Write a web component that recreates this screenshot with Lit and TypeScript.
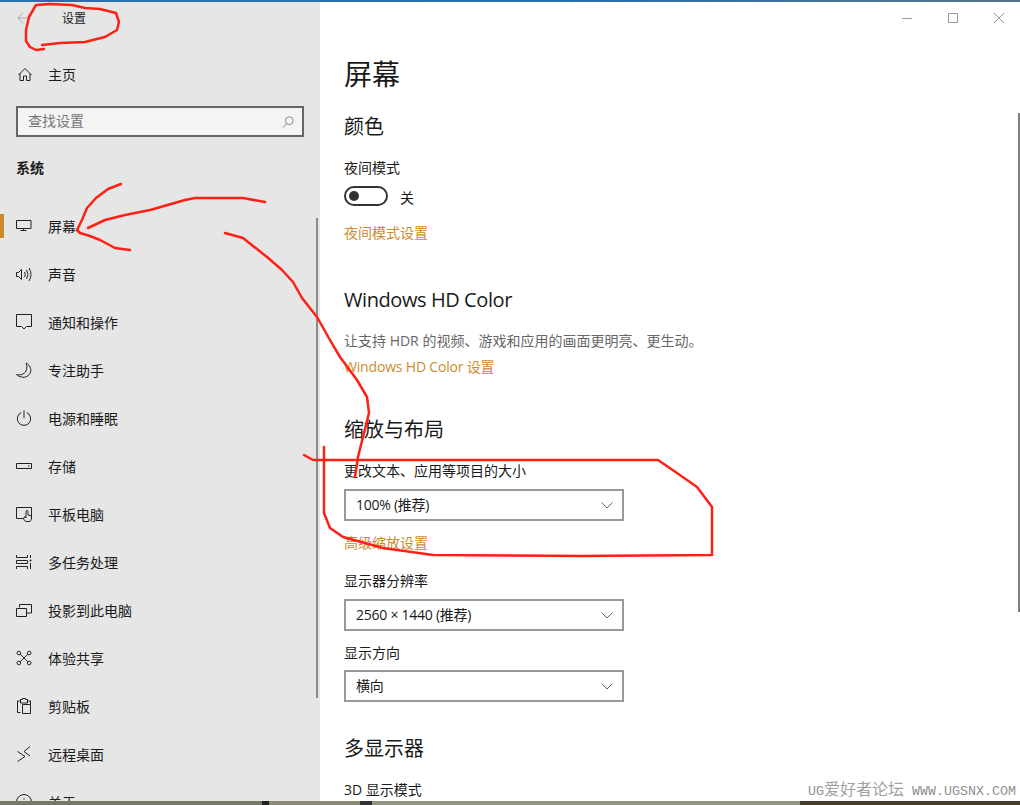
import { LitElement, html, css, svg } from "lit";
import { customElement } from "lit/decorators.js";

const ic = (body: unknown) => html`<svg class="ic" viewBox="0 0 16 16" width="16" height="16" fill="none" stroke="#222" stroke-width="1">${body}</svg>`;

const NAV: [string, unknown][] = [
  ["屏幕", svg`<path d="M.5 2.500h14.500v8H.5zM7.500 10.500v2.500M4.500 12.500h6"/>`],
  ["声音", svg`<path d="M.5 6.500v4h2l3 3V3.500l-3 3zM8.500 6q1.500 2.500 0 5M10.500 4q3 4.500 0 9M13 2q4 6.500 0 13"/>`],
  ["通知和操作", svg`<path d="M.5 .5h15v12h-5l-2.500 2.500-2.500-2.500h-5z"/>`],
  ["专注助手", svg`<path d="M10 1C14 3 15.500 7 14.500 10 13.500 14 9 16 5.500 15 3.500 14.500 1.500 14 .5 12.500 4 13.500 8 12.500 10 9 11.500 6 11 3 10 1z"/>`],
  ["电源和睡眠", svg`<path d="M8 .5V8M5.200 2.600A6.700 6.700 0 1 0 10.800 2.600"/>`],
  ["存储", svg`<path d="M.5 5.500h15v5H.5zM12 8h1.500"/>`],
  ["平板电脑", svg`<path d="M7 12.500H.5v-11h15v9M7.500 13l2 2.500h4.500l1.500-2.500v-3l-3.500-1V5.500a1 1 0 0 0-2 0V12L8.500 10.500z"/>`],
  ["多任务处理", svg`<path d="M.5 1v2.500h11V1M.5 15v-2.500h11V15M.5 6.500h11v3H.5zM14.500 1v3M14.500 9v6"/><circle cx="14.500" cy="6.500" r="1" fill="#222" stroke="none"/>`],
  ["投影到此电脑", svg`<path d="M3.500 5.500V2.500h12v8.500H11M.5 6.500h10v8H.5z"/>`],
  ["体验共享", svg`<circle cx="2.800" cy="3" r="1.800"/><circle cx="13.200" cy="3" r="1.800"/><circle cx="2.800" cy="13" r="1.800"/><circle cx="13.200" cy="13" r="1.800"/><path d="M4.200 4.200l7.600 7.600M11.800 4.200l-7.600 7.600"/>`],
  ["剪贴板", svg`<path d="M4.500 14.500h-3V3h3M11 3h3.500v3M4.500 3V1.500h2V.5h3v1h2V5h-7zM6.500 6.500h8v9h-8z"/>`],
  ["远程桌面", svg`<path d="M1.500 5.500l7.500 5-7.500 5M14 .5L8 5.500l6 4.500"/>`],
  ["关于", svg`<circle cx="8" cy="8" r="7.500"/><path d="M8 7v5M8 4v1.500"/>`],
];

const RED = [
  "M44 49L36 50L30 47L26 41L26 30L29 17L36 5L50 4L72 5L85 8L100 9L116 13L119 22L117 30L105 37L85 42L60 43L42 45",
  "M121 184L108 189L96 198L87 208L82 220L80 224L77 230L80 233L90 236L100 240L115 248L130 250",
  "M88 228L105 220L125 215L150 210L185 200L195 198L243 198L265 202",
  "M225 233L243 238L267 257L282 270L293 282L302 298L317 317L330 340L340 357L357 380L367 397L369 413L363 437L358 457L355 477",
  "M304 455L313 460L647 460L658 460L677 473L697 487L712 507L712 555L582 556L433 555L383 548L343 537L330 528L324 513L324 447",
];

@customElement("app-root")
export class AppRoot extends LitElement {
  static styles = css`
    :host {
      display: block;
      font-family: "Open Sans", "Noto Sans CJK SC", sans-serif;
      font-size: 14px;
      color: #1a1a1a;
    }
    .win {
      position: relative;
      width: 1020px;
      height: 805px;
      overflow: hidden;
      display: flex;
      flex-direction: column;
      background: #fff;
    }
    .top { height: 2px; flex: none; background: linear-gradient(90deg, #2c6ea8, #2f6fa6 60%, #56758c); }
    .body { flex: 1; display: flex; min-height: 0; }
    .bottom {
      height: 4px;
      flex: none;
      background: linear-gradient(90deg, #77776a 0 262px, #222 262px 269px, #8a8a76 269px 360px, #333 360px 372px, #90957f 372px 800px, #4a3a28 800px 1020px);
    }
    .side {
      position: relative;
      width: 320px;
      flex: none;
      background: #e6e6e6;
      overflow: hidden;
    }
    .sb {
      position: absolute;
      left: 316px;
      top: 216px;
      width: 2px;
      height: 480px;
      background: #8a8a8a;
    }
    .head {
      height: 32px;
      display: flex;
      align-items: center;
      padding-left: 17px;
      font-size: 12px;
    }
    .head svg { flex: none; }
    .head span { margin-left: 32px; }
    .row {
      height: 48px;
      display: flex;
      align-items: center;
      padding-left: 16px;
      position: relative;
    }
    .ic { flex: none; }
    .row .lb { margin-left: 16px; }
    .home { margin-top: 16px; }
    .search {
      margin: 8px 16px 0;
      height: 31px;
      box-sizing: border-box;
      border: 2px solid #666;
      background: #f4f4f4;
      display: flex;
      align-items: center;
      justify-content: space-between;
      padding: 0 8px 0 10px;
      color: #767676;
    }
    .search span { margin-bottom: 3px; }
    .group {
      margin: 20px 0 0 16px;
      height: 22px;
      line-height: 22px;
      font-weight: 700;
      font-size: 14px;
    }
    .list { margin-top: 23px; }
    .mark {
      position: absolute;
      left: 0;
      top: 12px;
      width: 4px;
      height: 24px;
      background: #cc8b2d;
    }
    .main {
      position: relative;
      flex: 1;
      padding: 0 0 0 24px;
      overflow: hidden;
    }
    .ctl {
      position: absolute;
      top: 11px;
      left: 582px;
      display: flex;
      gap: 36px;
    }
    .scroll {
      position: absolute;
      right: 0;
      top: 111px;
      width: 2px;
      height: 499px;
      background: #7f7f7f;
    }
    h1 { margin: 52px 0 0; font-size: 28px; font-weight: 400; height: 40px; line-height: 40px; }
    h2 { margin: 0; font-size: 20px; font-weight: 400; height: 28px; line-height: 28px; }
    .latin { letter-spacing: -0.42px; }
    .t { height: 20px; line-height: 20px; }
    .link { height: 20px; line-height: 20px; color: #cc8b2d; }
    .link.tight { letter-spacing: -0.18px; }
    .desc { height: 20px; line-height: 20px; color: #666; }
    .togrow { display: flex; align-items: center; height: 20px; margin-top: 8px; }
    .tog {
      width: 44px;
      height: 20px;
      box-sizing: border-box;
      border: 2px solid #333;
      border-radius: 10px;
      display: flex;
      align-items: center;
      padding-left: 3px;
    }
    .tog i { width: 10px; height: 10px; border-radius: 50%; background: #333; display: block; }
    .togrow span { margin: 2px 0 0 12px; }
    .sel {
      width: 280px;
      height: 32px;
      box-sizing: border-box;
      border: 2px solid #999;
      display: flex;
      align-items: center;
      justify-content: space-between;
      padding: 0 9px 0 10px;
      letter-spacing: -0.25px;
    }
    .sel span { margin-bottom: 2px; }
    .m1 { margin-top: 19px; }
    .m2 { margin-top: 17px; }
    .m3 { margin-top: 43px; }
    .m4 { margin-top: 17px; }
    .m5 { margin-top: 8px; }
    .m6 { margin-top: 6px; }
    .m7 { margin-top: 39px; }
    .m8 { margin-top: 18px; }
    .m9 { margin-top: 12px; }
    .m12 { margin-top: 7px; }
    .m13 { margin-top: 33px; }
    .m14 { margin-top: 17px; }
    .wm {
      position: absolute;
      right: 4px;
      bottom: 1px;
      font-family: "Liberation Mono", "Noto Sans CJK SC", monospace;
      font-size: 13.33px;
      line-height: 16px;
      color: #909090;
      white-space: nowrap;
    }
    .wm b { font-weight: 400; font-size: 16px; color: #a0a0a0; }
    .ink {
      position: absolute;
      inset: 0;
      pointer-events: none;
    }
  `;

  private chevron() {
    return html`<svg width="12" height="7" viewBox="0 0 12 7" fill="none" stroke="#666"><path d="M.5.5L6 6l5.500-5.500"/></svg>`;
  }

  render() {
    return html`
      <div class="win">
        <div class="top"></div>
        <div class="body">
          <aside class="side">
            <div class="head">
              <svg width="13" height="12" viewBox="0 0 13 12" fill="none" stroke="#aaa" stroke-width="1"><path d="M6 .5L.8 6 6 11.500M1 6h12"/></svg>
              <span>设置</span>
            </div>
            <div class="row home">
              ${ic(svg`<path d="M2.500 9L9 2.500 15.500 9M4 7.500v7h3.500v-4.500h3v4.500H14v-7"/>`)}
              <span class="lb">主页</span>
            </div>
            <div class="search">
              <span>查找设置</span>
              <svg width="12" height="12" viewBox="0 0 14 14" fill="none" stroke="#777"><circle cx="8.500" cy="5.500" r="4.500"/><path d="M5.500 9L1 13.500"/></svg>
            </div>
            <div class="group">系统</div>
            <div class="list">
              ${NAV.map(
                ([label, icon], i) => html`<div class="row">
                  ${i === 0 ? html`<div class="mark"></div>` : ""}
                  ${ic(icon)}
                  <span class="lb">${label}</span>
                </div>`
              )}
            </div>
            <div class="sb"></div>
          </aside>
          <main class="main">
            <div class="ctl">
              <svg width="10" height="10" viewBox="0 0 10 10" fill="none" stroke="#999"><path d="M0 5.500h10"/></svg>
              <svg width="10" height="10" viewBox="0 0 10 10" fill="none" stroke="#999"><path d="M.5.5h9v9h-9z"/></svg>
              <svg width="10" height="10" viewBox="0 0 10 10" fill="none" stroke="#999"><path d="M0 0l10 10M10 0L0 10"/></svg>
            </div>
            <div class="scroll"></div>
            <h1>屏幕</h1>
            <h2 class="m1">颜色</h2>
            <div class="t m2">夜间模式</div>
            <div class="togrow"><div class="tog"><i></i></div><span>关</span></div>
            <div class="link m4">夜间模式设置</div>
            <h2 class="m3 latin">Windows HD Color</h2>
            <div class="desc m4">让支持 HDR 的视频、游戏和应用的画面更明亮、更生动。</div>
            <div class="link tight m6">Windows HD Color 设置</div>
            <h2 class="m7">缩放与布局</h2>
            <div class="t m4">更改文本、应用等项目的大小</div>
            <div class="sel m5"><span>100% (推荐)</span>${this.chevron()}</div>
            <div class="link m9">高级缩放设置</div>
            <div class="t m8">显示器分辨率</div>
            <div class="sel m5"><span>2560 × 1440 (推荐)</span>${this.chevron()}</div>
            <div class="t m9">显示方向</div>
            <div class="sel m12"><span>横向</span>${this.chevron()}</div>
            <h2 class="m13">多显示器</h2>
            <div class="t m14">3D 显示模式</div>
            <div class="wm">UG<b>爱好者论坛</b> WWW.UGSNX.COM</div>
          </main>
        </div>
        <div class="bottom"></div>
        <svg class="ink" width="1020" height="805" viewBox="0 0 1020 805" fill="none" stroke="#ff2015" stroke-width="2.500" stroke-linejoin="round" stroke-linecap="round">
          ${RED.map((d) => svg`<path d=${d}/>`)}
        </svg>
      </div>
    `;
  }
}
